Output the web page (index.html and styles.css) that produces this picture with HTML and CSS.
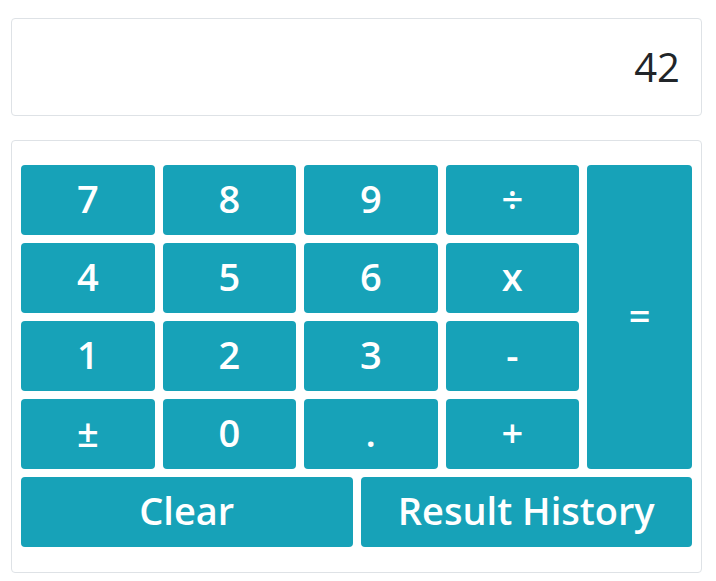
FILE: index.html
```html
<!DOCTYPE html>
<html>
<head>
<meta charset="utf-8">
<link rel="stylesheet" href="styles.css">
</head>
<body>
<div class="calc">
  <div class="display">42</div>
  <div class="keypad">
    <div class="keys">
      <button class="key">7</button>
      <button class="key">8</button>
      <button class="key">9</button>
      <button class="key">÷</button>
      <button class="key equals">=</button>
      <button class="key">4</button>
      <button class="key">5</button>
      <button class="key">6</button>
      <button class="key">x</button>
      <button class="key">1</button>
      <button class="key">2</button>
      <button class="key">3</button>
      <button class="key">-</button>
      <button class="key">±</button>
      <button class="key">0</button>
      <button class="key">.</button>
      <button class="key">+</button>
    </div>
    <div class="actions">
      <button class="key wide">Clear</button>
      <button class="key wide">Result History</button>
    </div>
  </div>
</div>
</body>
</html>
```
FILE: styles.css
```css
html, body {
  margin: 0;
  padding: 0;
  background: #fff;
}
.calc {
  padding: 18px 14px 0 11px;
  display: flex;
  flex-direction: column;
  gap: 24px;
  font-family: "Open Sans", "Noto Sans", sans-serif;
}
.display {
  box-sizing: border-box;
  height: 98px;
  border: 1px solid #dee2e6;
  border-radius: 4px;
  display: flex;
  align-items: center;
  justify-content: flex-end;
  padding: 0 21px 2px 0;
  font-size: 40px;
  font-weight: 500;
  color: #212529;
}
.keypad {
  box-sizing: border-box;
  border: 1px solid #dee2e6;
  border-radius: 4px;
  padding: 24px 9px 25px 9px;
  display: flex;
  flex-direction: column;
  gap: 8px;
}
.keys {
  display: grid;
  grid-template-columns: 1fr 1fr 1fr 1fr 105px;
  grid-auto-rows: 70px;
  column-gap: 8px;
  row-gap: 8px;
}
.actions {
  display: grid;
  grid-template-columns: 1fr 1fr;
  grid-auto-rows: 70px;
  gap: 8px;
}
.key {
  border: none;
  border-radius: 4px;
  background: #17a2b8;
  color: #fff;
  font-family: inherit;
  font-weight: 600;
  font-size: 38px;
  padding: 0 0 4px 0;
  margin: 0;
  line-height: 1;
}
.equals {
  grid-column: 5;
  grid-row: 1 / span 4;
}
.wide {
  font-size: 38px;
}
```
